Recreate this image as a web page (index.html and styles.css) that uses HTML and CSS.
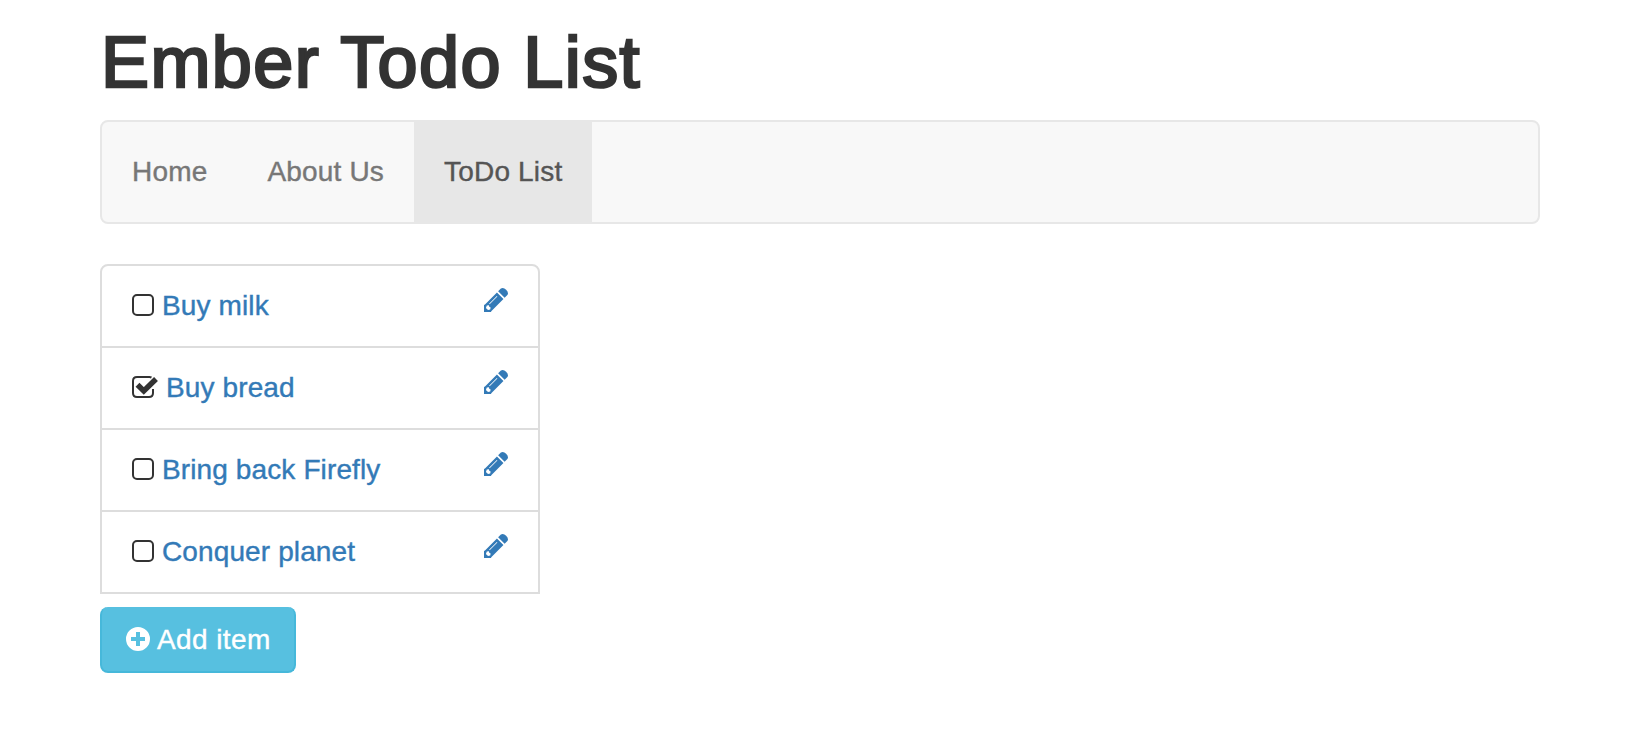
FILE: index.html
```
<!DOCTYPE html>
<html lang="en">
<head>
<meta charset="utf-8">
<title>Ember Todo List</title>
<link rel="stylesheet" href="styles.css">
</head>
<body>
<svg class="sprite" width="0" height="0" aria-hidden="true">
  <symbol id="pencil" viewBox="0 0 24 24">
    <g transform="translate(0 24) rotate(-45)">
      <path d="M24.600-4.600H28.500Q31.300-4 31.300 0T28.500 4.600H24.600Z"/>
      <path fill-rule="evenodd" d="M0 0 4.900-4.900 6-4.600H22.900V4.600H6L4.900 4.900ZM4.200-1.500V1.500L6.200 2.600 7.800 1.600 7.400 0 8.200-1.200 6.600-2.600ZM9.500-2.300V-1.500H20.500V-2.300Z"/>
    </g>
  </symbol>
</svg>
<div class="container">
  <h1 class="title">Ember Todo List</h1>
  <nav class="navbar">
    <a class="nav-link">Home</a>
    <a class="nav-link">About Us</a>
    <a class="nav-link active">ToDo List</a>
  </nav>
  <ul class="list">
    <li class="item"><svg class="check" width="22" height="22" viewBox="0 0 22 22"><rect x="1" y="1" width="20" height="20" rx="4"/></svg><a class="label">Buy milk</a><svg class="pencil" width="24" height="24"><use href="#pencil"/></svg></li>
    <li class="item"><svg class="check" width="26" height="22" viewBox="0 0 26 22"><path d="M19.500 1.500Q18.500 1 17.500 1H5Q1 1 1 5V17Q1 21 5 21H17Q21 21 21 17V13"/><path class="tick" d="M5.500 8.800 11.800 15 24 3"/></svg><a class="label">Buy bread</a><svg class="pencil" width="24" height="24"><use href="#pencil"/></svg></li>
    <li class="item"><svg class="check" width="22" height="22" viewBox="0 0 22 22"><rect x="1" y="1" width="20" height="20" rx="4"/></svg><a class="label">Bring back Firefly</a><svg class="pencil" width="24" height="24"><use href="#pencil"/></svg></li>
    <li class="item"><svg class="check" width="22" height="22" viewBox="0 0 22 22"><rect x="1" y="1" width="20" height="20" rx="4"/></svg><a class="label">Conquer planet</a><svg class="pencil" width="24" height="24"><use href="#pencil"/></svg></li>
  </ul>
  <button class="add"><svg width="24" height="24" viewBox="0 0 24 24"><path fill="#fff" fill-rule="evenodd" d="M12 0A12 12 0 1 1 12 24A12 12 0 1 1 12 0ZM10 5V10H5V14H10V19H14V14H19V10H14V5Z"/></svg><span>Add item</span></button>
</div>
</body>
</html>
```
FILE: styles.css
```
* { box-sizing: border-box; }
body {
  margin: 0;
  background: #fff;
  color: #333;
  font: 28px/40px "Liberation Sans", Arial, sans-serif;
}
.sprite { display: block; }
.container { width: 1440px; margin-left: 100px; padding-top: 22px; }
.title {
  margin: 0 0 18px;
  padding-left: 1px;
  font-size: 72px;
  font-weight: 400;
  line-height: 80px;
  letter-spacing: 1.4px;
  -webkit-text-stroke: 2.6px #333;
}
.navbar {
  display: flex;
  height: 104px;
  border: 2px solid #e7e7e7;
  border-radius: 8px;
  background: #f8f8f8;
}
.nav-link { padding: 30px; color: #777; letter-spacing: .18px; -webkit-text-stroke: .4px; }
.nav-link.active { background: #e7e7e7; color: #555; }
.list {
  width: 440px;
  margin: 40px 0 13px;
  padding: 0;
  list-style: none;
  border: 2px solid #ddd;
  border-radius: 8px 8px 0 0;
}
.item {
  display: flex;
  align-items: flex-start;
  height: 82px;
  padding: 20px 30px;
  border-bottom: 2px solid #ddd;
}
.item:last-child { height: 80px; border-bottom: 0; }
.label { margin: 0 auto 0 8px; color: #337ab7; letter-spacing: .12px; -webkit-text-stroke: .4px; }
.check { margin-top: 8px; fill: none; stroke: #333; stroke-width: 2; }
.tick { stroke-width: 5.5; }
.pencil { margin-top: 2px; fill: #337ab7; }
.add {
  display: flex;
  gap: 7px;
  width: 196px;
  height: 66px;
  padding: 20px 24px;
  border: 2px solid #46b8da;
  border-top: 0;
  border-radius: 8px;
  background: #57c0e0;
  color: #fff;
  font: inherit;
  line-height: 25px;
  letter-spacing: .4px;
  white-space: nowrap;
  -webkit-text-stroke: .4px;
}
.add svg { flex: none; }
```
